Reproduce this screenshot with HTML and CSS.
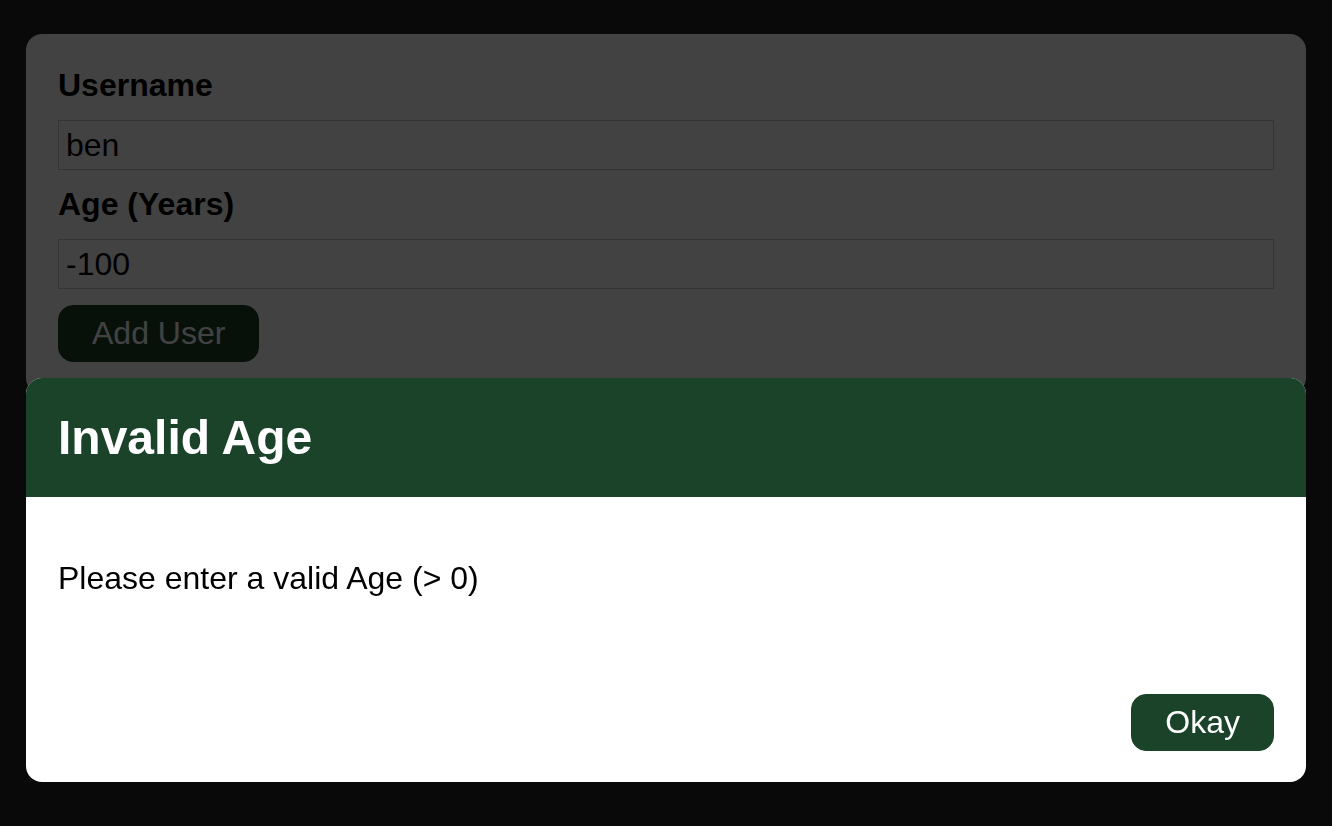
FILE: index.html
```html
<!DOCTYPE html>
<html lang="en">
<head>
<meta charset="utf-8">
<title>Add User</title>
<link rel="stylesheet" href="styles.css">
</head>
<body>
  <div class="page">
    <form class="card">
      <div class="control">
        <label for="username">Username</label>
        <input id="username" type="text" value="ben">
      </div>
      <div class="control">
        <label for="age">Age (Years)</label>
        <input id="age" type="number" value="-100">
      </div>
      <button type="button" class="btn">Add User</button>
    </form>
  </div>
  <div class="backdrop"></div>
  <div class="modal">
    <header class="modal-header">
      <h2>Invalid Age</h2>
    </header>
    <div class="modal-body">
      <p>Please enter a valid Age (&gt; 0)</p>
    </div>
    <footer class="modal-footer">
      <button type="button" class="btn">Okay</button>
    </footer>
  </div>
</body>
</html>
```

FILE: styles.css
```css
* {
  box-sizing: border-box;
}

html, body {
  margin: 0;
  height: 100%;
}

body {
  background: #262626;
  font-family: "Liberation Sans", Arial, Helvetica, sans-serif;
  font-size: 32px;
  line-height: 36px;
}

.page {
  padding: 34px 26px;
}

.card {
  background: #ffffff;
  border-radius: 16px;
  padding: 33px 32px 32px;
  margin: 0;
}

.control {
  margin-bottom: 16px;
}

.control label {
  display: block;
  font-weight: bold;
  color: #000;
  margin-bottom: 17px;
}

.control input {
  display: block;
  width: 100%;
  height: 50px;
  font: inherit;
  color: #000;
  border: 1px solid #cccccc;
  padding: 0 7px;
  margin: 0 0 3px 0;
  background: #fff;
  -moz-appearance: textfield;
}

.control input::-webkit-outer-spin-button,
.control input::-webkit-inner-spin-button {
  -webkit-appearance: none;
  margin: 0;
}

.btn {
  font: inherit;
  background: #1b4329;
  color: #ffffff;
  border: 1px solid #1b4329;
  border-radius: 15px;
  padding: 9px 33px 10px;
  cursor: pointer;
  line-height: 36px;
}

.backdrop {
  position: fixed;
  inset: 0;
  background: rgba(0, 0, 0, 0.74);
}

.modal {
  position: fixed;
  top: 378px;
  left: 26px;
  width: 1280px;
  background: #ffffff;
  border-radius: 16px;
  overflow: hidden;
}

.modal-header {
  background: #1b4329;
  padding: 32px;
}

.modal-header h2 {
  margin: 0;
  color: #ffffff;
  font-size: 48px;
  line-height: 55px;
  font-weight: bold;
}

.modal-body {
  padding: 32px;
}

.modal-body p {
  margin: 31px 0;
  color: #000;
}

.modal-footer {
  display: flex;
  justify-content: flex-end;
  padding: 35px 32px 31px;
}

.modal-footer .btn {
  padding: 9px 33px 10px;
}
```
